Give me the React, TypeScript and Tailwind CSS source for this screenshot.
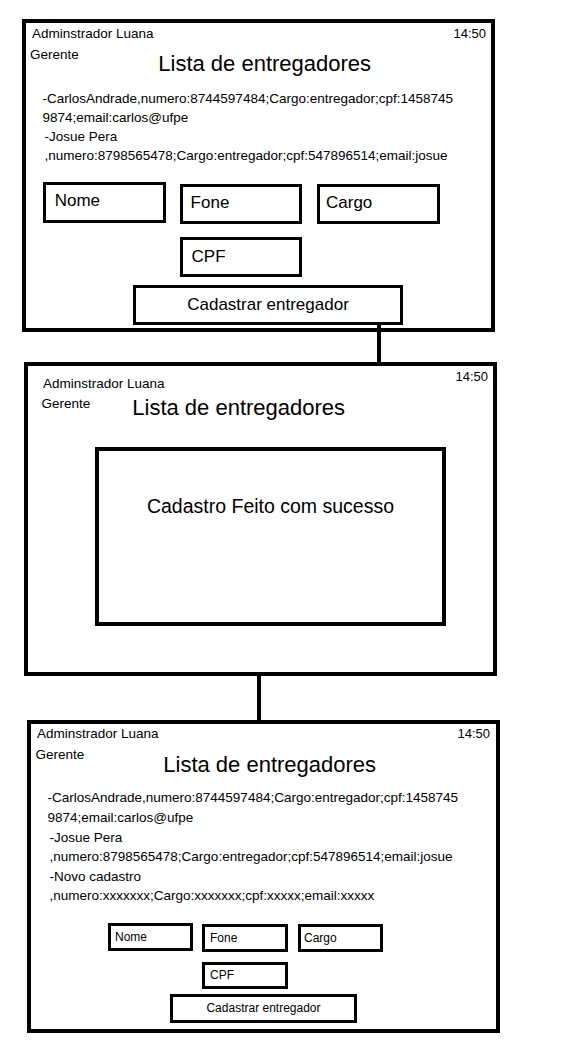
import React from "react";

function Box({
  label,
  className,
}: {
  label: string;
  className: string;
}) {
  return <div className={`border-[3px] border-black ${className}`}>{label}</div>;
}

export default function App() {
  return (
    <div className="flex flex-col bg-white pb-[25px] font-['Liberation_Sans',Arial,sans-serif] text-black">
      {/* tela 1 - lista + formulario */}
      <div className="ml-[22px] mt-[19px] flex h-[313px] w-[473px] flex-col border-4 border-black">
        <div className="flex items-start justify-between pl-[6px] pr-[5px] pt-[2.5px]">
          <span className="mt-[0.5px] text-[13.5px] leading-[16px]">Adminstrador Luana</span>
          <span className="text-[13px] leading-[16px]">14:50</span>
        </div>
        <div className="flex items-start pl-[4px]">
          <span className="mt-[5.3px] text-[13.5px] leading-[16px]">Gerente</span>
          <h1 className="ml-[79.5px] mt-[9.4px] text-[22px] leading-[26px]">Lista de entregadores</h1>
        </div>
        <div className="mt-[11.4px] pl-[16.5px] text-[13.5px] leading-[19px]">
          <p>-CarlosAndrade,numero:8744597484;Cargo:entregador;cpf:1458745</p>
          <p>9874;email:carlos@ufpe</p>
          <p className="pl-[2px]">-Josue Pera</p>
          <p className="pl-[2px]">,numero:8798565478;Cargo:entregador;cpf:547896514;email:josue</p>
        </div>
        <div className="mt-[17.2px] flex items-start pl-[17px] text-[17px] leading-[20px]">
          <Box label="Nome" className="h-[41px] w-[123px] pl-[8.7px] pt-[6px]" />
          <Box label="Fone" className="ml-[14px] mt-[2px] h-[40px] w-[122px] pl-[7.6px] pt-[6px]" />
          <Box label="Cargo" className="ml-[15px] mt-[2px] h-[40px] w-[123px] pl-[6px] pt-[6px]" />
        </div>
        <div className="ml-[154px] mt-[13px] text-[17px] leading-[20px]">
          <Box label="CPF" className="h-[40px] w-[122px] pl-[8.6px] pt-[7px]" />
        </div>
        <div className="ml-[107px] mt-[8px] flex h-[40px] w-[270px] items-center justify-center border-[3px] border-black text-[17px] leading-[20px]">
          Cadastrar entregador
        </div>
        <div className="ml-[351px] h-[3px] w-[4px] bg-black" />
      </div>

      <div className="ml-[377px] h-[30px] w-[4px] bg-black" />

      {/* tela 2 - confirmacao */}
      <div className="ml-[24px] flex h-[314px] w-[473px] flex-col border-4 border-black">
        <div className="flex items-start justify-between pl-[15px] pr-[5px] pt-[2.5px]">
          <span className="mt-[7.8px] text-[13.5px] leading-[16px]">Adminstrador Luana</span>
          <span className="text-[13px] leading-[16px]">14:50</span>
        </div>
        <div className="flex items-start pl-[13.5px]">
          <span className="mt-[4px] text-[13.5px] leading-[16px]">Gerente</span>
          <h1 className="ml-[42px] mt-[3.1px] text-[22px] leading-[26px]">Lista de entregadores</h1>
        </div>
        <div className="ml-[67px] mt-[25.6px] h-[179px] w-[351px] border-4 border-black pt-[43.7px] text-center text-[19.5px] leading-[23px]">
          Cadastro Feito com sucesso
        </div>
      </div>

      <div className="ml-[257px] h-[44px] w-[4px] bg-black" />

      {/* tela 3 - lista atualizada */}
      <div className="ml-[27px] flex h-[313px] w-[473px] flex-col border-4 border-black">
        <div className="flex items-start justify-between pl-[6px] pr-[6px] pt-[1.5px]">
          <span className="mt-[0.8px] text-[13.5px] leading-[16px]">Adminstrador Luana</span>
          <span className="text-[13px] leading-[16px]">14:50</span>
        </div>
        <div className="flex items-start pl-[4.5px]">
          <span className="mt-[5px] text-[13.5px] leading-[16px]">Gerente</span>
          <h1 className="ml-[79px] mt-[10.1px] text-[22px] leading-[26px]">Lista de entregadores</h1>
        </div>
        <div className="mt-[10px] pl-[16.5px] text-[13.5px] leading-[19.6px]">
          <p>-CarlosAndrade,numero:8744597484;Cargo:entregador;cpf:1458745</p>
          <p>9874;email:carlos@ufpe</p>
          <p className="pl-[2px]">-Josue Pera</p>
          <p className="pl-[2px]">,numero:8798565478;Cargo:entregador;cpf:547896514;email:josue</p>
          <p className="pl-[2px]">-Novo cadastro</p>
          <p className="pl-[2px]">,numero:xxxxxxx;Cargo:xxxxxxx;cpf:xxxxx;email:xxxxx</p>
        </div>
        <div className="mt-[17px] flex items-start pl-[77px] text-[12px] leading-[14px]">
          <Box label="Nome" className="h-[28px] w-[85px] pl-[4px] pt-[4px]" />
          <Box label="Fone" className="ml-[9px] mt-[1px] h-[28px] w-[86px] pl-[5px] pt-[4px]" />
          <Box label="Cargo" className="ml-[10px] mt-[1px] h-[28px] w-[85px] pl-[3px] pt-[4px]" />
        </div>
        <div className="ml-[171px] mt-[10px] text-[12px] leading-[14px]">
          <Box label="CPF" className="h-[27px] w-[86px] pl-[5px] pt-[3px]" />
        </div>
        <div className="ml-[139px] mt-[5px] flex h-[29px] w-[187px] items-center justify-center border-[3px] border-black text-[12px] leading-[14px]">
          Cadastrar entregador
        </div>
      </div>
    </div>
  );
}
